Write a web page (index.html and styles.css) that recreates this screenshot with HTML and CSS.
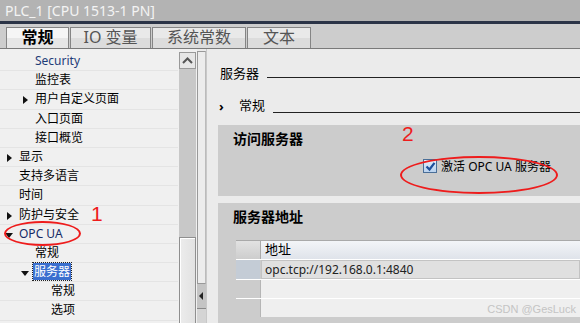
FILE: index.html
```html
<html lang="zh">
<head>
<meta charset="UTF-8">
<title>PLC_1</title>
<link rel="stylesheet" href="styles.css">
</head>
<body>
  <div class="titlebar">PLC_1 [CPU 1513-1 PN]</div>

  <div class="tabs">
    <div class="tab tab-active">常规</div>
    <div class="tab tab-io">IO 变量</div>
    <div class="tab tab-const">系统常数</div>
    <div class="tab tab-text">文本</div>
  </div>

  <div class="main">
    <div class="tree">
      <div class="row lvl1 latin sec">Security</div>
      <div class="row lvl1">监控表</div>
      <div class="row lvl1 has-kids"><span class="arrow right"></span>用户自定义页面</div>
      <div class="row lvl1">入口页面</div>
      <div class="row lvl1">接口概览</div>
      <div class="row lvl0 has-kids"><span class="arrow right"></span>显示</div>
      <div class="row lvl0">支持多语言</div>
      <div class="row lvl0">时间</div>
      <div class="row lvl0 has-kids"><span class="arrow right"></span>防护与安全</div>
      <div class="row lvl0 has-kids latin opc"><span class="arrow down"></span>OPC UA</div>
      <div class="row lvl1">常规</div>
      <div class="row lvl1 has-kids"><span class="arrow down"></span><span class="selected">服务器</span></div>
      <div class="row lvl2">常规</div>
      <div class="row lvl2">选项</div>
    </div>

    <div class="scrollbar">
      <div class="scroll-up">
        <svg width="11" height="7" viewBox="0 0 11 7"><path d="M1 6 L5.5 1.5 L10 6" fill="none" stroke="#555" stroke-width="2"/></svg>
      </div>
      <div class="scroll-track"></div>
      <div class="scroll-thumb"></div>
    </div>

    <div class="splitter">
      <div class="splitter-top"></div>
      <div class="splitter-grip"><span class="grip-arrow"></span></div>
      <div class="splitter-bottom"></div>
    </div>

    <div class="content">
      <div class="heading">
        <span class="heading-text">服务器</span>
        <span class="heading-line"></span>
      </div>
      <div class="subheading">
        <span class="chevron">›</span>
        <span class="heading-text">常规</span>
        <span class="heading-line"></span>
      </div>

      <div class="section section-access">
        <div class="section-title">访问服务器</div>
        <label class="check-row">
          <span class="checkbox">
            <svg width="11" height="11" viewBox="0 0 11 11"><path d="M1.5 5.5 L4.5 8.5 L9.5 1.8" fill="none" stroke="#1d4f9c" stroke-width="2.2"/></svg>
          </span>
          <span class="check-label">激活 <span class="latin">OPC UA</span> 服务器</span>
        </label>
      </div>

      <div class="section section-address">
        <div class="section-title">服务器地址</div>
        <div class="table">
          <div class="trow thead">
            <div class="tcell-side"></div>
            <div class="tcell">地址</div>
          </div>
          <div class="trow tdata">
            <div class="tcell-side"></div>
            <div class="tcell">opc.tcp://192.168.0.1:4840</div>
          </div>
          <div class="trow tempty">
            <div class="tcell-side"></div>
            <div class="tcell"></div>
          </div>
          <div class="trow tempty">
            <div class="tcell-side"></div>
            <div class="tcell"></div>
          </div>
        </div>
      </div>
    </div>
  </div>

  <!-- red annotations drawn over the screenshot -->
  <div class="mark mark-ellipse-1"></div>
  <div class="mark mark-num mark-num-1">1</div>
  <div class="mark mark-ellipse-2"></div>
  <div class="mark mark-num mark-num-2">2</div>
  <div class="watermark">CSDN @GesLuck</div>
</body>
</html>
```

FILE: styles.css
```css
:root{
  --cjk: "Noto Sans", "Noto Sans CJK SC", sans-serif;
  --title-bg: #b3b3b3;
  --navy: #2b3447;
  --tabbar: #cdcdcd;
  --tree-bg: #f0f0f0;
  --panel-bg: #ebebeb;
  --section-bg: #cccccc;
  --red: #ee1c1c;
}

*{
  margin: 0;
  padding: 0;
  box-sizing: border-box;
}

body {
  width: 580px;
  height: 323px;
  overflow: hidden;
  position: relative;
  font-family: var(--cjk);
  color: #000;
  background: var(--panel-bg);
}

.titlebar {
  height: 24px;
  padding-left: 5px;
  background: var(--title-bg);
  border-bottom: 3px solid var(--navy);
  color: #f3f3f3;
  font-size: 14px;
  line-height: 21px;
}

/* tabs */
.tabs {
  height: 25px;
  display: flex;
  align-items: flex-end;
  gap: 1px;
  padding-left: 6px;
  background: var(--tabbar);
  border-bottom: 1px solid #7a7a7a;
}

.tab {
  height: 21px;
  border: 1px solid #858585;
  border-bottom: none;
  background: linear-gradient(#e9e9e9 0, #e9e9e9 50%, #dcdcdc 50%, #dcdcdc 100%);
  color: #555;
  font-size: 16px;
  line-height: 19px;
  text-align: center;
}

.tab-active {
  width: 63px;
  color: #000;
  font-weight: bold;
  background: linear-gradient(#f5f5f5 0, #f5f5f5 50%, #e6e6e6 50%, #e6e6e6 100%);
}

.tab-io { width: 81px; }
.tab-const { width: 94px; }
.tab-text { width: 64px; }

/* main area */
.main {
  display: flex;
  height: 274px;
}

.tree {
  width: 178px;
  background: var(--tree-bg);
  padding-top: 3px;
  overflow: hidden;
}

.row {
  position: relative;
  height: 19.2px;
  border-bottom: 1px solid #e4e4e4;
  font-size: 12px;
  line-height: 18px;
  white-space: nowrap;
}

.lvl0 { padding-left: 19px; }
.lvl1 { padding-left: 35px; }
.lvl2 { padding-left: 51px; }

.latin { font-family: "Noto Sans", sans-serif; }
.sec { color: #1f3c78; font-size: 12px; }
.opc { color: #142a66; }

.arrow {
  position: absolute;
  top: 6px;
  width: 0;
  height: 0;
}
.lvl0 .arrow { left: 7px; }
.lvl1 .arrow { left: 23px; }

.arrow.right {
  border-top: 4px solid transparent;
  border-bottom: 4px solid transparent;
  border-left: 5px solid #111;
}

.arrow.down {
  top: 8px;
  border-left: 4px solid transparent;
  border-right: 4px solid transparent;
  border-top: 5px solid #111;
}
.lvl0 .arrow.down { left: 5px; }
.lvl1 .arrow.down { left: 21px; }

.selected {
  display: inline-block;
  margin-left: -2px;
  padding: 0 1px;
  background: #3a6fcf;
  color: #fff;
  outline: 1px dotted #222;
  line-height: 17px;
}

/* scrollbar + splitter */
.scrollbar {
  width: 19px;
  display: flex;
  flex-direction: column;
  background: #f0f0f0;
  padding: 3px 1px 0 1px;
}

.scroll-up {
  height: 17px;
  border: 1px solid #999;
  background: #e6e6e6;
  display: flex;
  align-items: center;
  justify-content: center;
}

.scroll-track {
  height: 168px;
  background: #c8c8c8;
}

.scroll-thumb {
  flex: 1;
  border: 1px solid #8f8f8f;
  border-bottom: none;
  box-shadow: inset 1px 1px 0 #fff;
  background: linear-gradient(90deg, #ececec, #e2e2e2);
}

.splitter {
  width: 9px;
  display: flex;
  flex-direction: column;
  padding-top: 2px;
}

.splitter-top {
  height: 233px;
  border: 1px solid #999;
  border-right-color: #bbb;
  background: #ececec;
}

.splitter-grip {
  height: 24px;
  background: #c4c4c4;
  position: relative;
}

.grip-arrow {
  position: absolute;
  left: 2px;
  top: 8px;
  border-top: 4px solid transparent;
  border-bottom: 4px solid transparent;
  border-right: 4px solid #222;
}

.splitter-bottom {
  flex: 1;
  border-top: 1px solid #888;
  background: #d4d4d4;
}

/* right panel */
.content {
  flex: 1;
  background: var(--panel-bg);
  border-left: 1px solid #c8c8c8;
  padding-left: 11px;
  overflow: hidden;
}

.heading, .subheading {
  display: flex;
  align-items: flex-end;
  font-size: 13px;
  line-height: 18px;
}

.heading {
  margin-top: 15px;
  padding-left: 2px;
}

.subheading {
  margin-top: 12px;
  height: 20px;
}

.heading-line {
  flex: 1;
  height: 1px;
  background: #222;
  margin: 0 0 4px 8px;
}

.subheading .heading-line { margin-bottom: 1px; }

.chevron {
  width: 21px;
  padding-left: 1px;
  font-weight: bold;
  font-size: 13px;
  line-height: 16px;
}

.section {
  background: var(--section-bg);
  padding-left: 15px;
}

.section-access {
  margin-top: 11px;
  height: 71px;
}

.section-address {
  margin-top: 7px;
  height: 130px;
}

.section-title {
  padding-top: 5px;
  font-size: 14px;
  font-weight: bold;
  line-height: 18px;
}

.check-row {
  display: flex;
  align-items: center;
  margin: 9px 0 0 190px;
  font-size: 12px;
  gap: 4px;
}

.checkbox {
  width: 14px;
  height: 14px;
  border: 1px solid #4a6e97;
  background: linear-gradient(#e3eefb, #b9d2ee);
  display: flex;
  align-items: center;
  justify-content: center;
}

/* address table */
.table {
  margin-top: 14px;
  margin-left: 3px;
}

.trow {
  display: flex;
  height: 19px;
}

.tcell-side { width: 24px; }

.tcell {
  flex: 1;
  font-size: 12px;
  line-height: 17px;
  padding-left: 3px;
}

.thead {
  border-top: 1px solid #a9a9a9;
}

.thead .tcell-side {
  background: linear-gradient(#e2e2e2, #cdcdcd);
}

.thead .tcell {
  border-left: 1px solid #aaa;
  padding-left: 4px;
  font-size: 13px;
  background: linear-gradient(#f3f5f8, #dfe3ea);
}

.tdata {
  height: 20px;
  border-top: 1px solid #fff;
}

.tdata .tcell-side { background: #c4ccd6; }

.tdata .tcell {
  margin-left: 1px;
  border: 1px solid #c3c3c3;
  background: #e0e0e0;
  color: #222;
}

.tempty {
  border-top: 1px solid #fff;
}

.tempty .tcell-side { background: #cccccc; }

.tempty .tcell {
  border-left: 1px solid #b5b5b5;
  background: #efefef;
}

/* overlays: red marks and watermark */
.mark { position: absolute; }

.mark-ellipse-1 {
  left: 4px;
  top: 221px;
  width: 77px;
  height: 25px;
  border: 2.5px solid var(--red);
  border-radius: 50%;
}

.mark-ellipse-2 {
  left: 400px;
  top: 156px;
  width: 158px;
  height: 38px;
  border: 2.5px solid var(--red);
  border-radius: 50%;
}

.mark-num {
  color: var(--red);
  font-family: "Liberation Sans", sans-serif;
  font-size: 21px;
  line-height: 21px;
}

.mark-num-1 { left: 91px; top: 203px; }
.mark-num-2 { left: 402px; top: 123px; }

.watermark {
  position: absolute;
  right: 4px;
  top: 303px;
  color: #c4c4c4;
  font-family: "Liberation Sans", sans-serif;
  font-size: 11px;
}
```
